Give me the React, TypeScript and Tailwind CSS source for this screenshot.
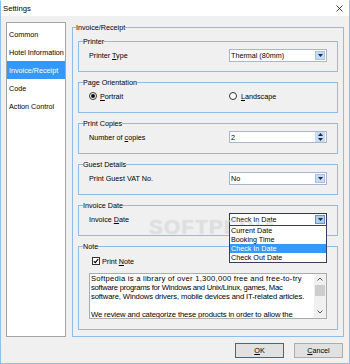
import React from "react";

// Access-key underline (Windows mnemonic)
function Mn({ children }: { children: React.ReactNode }) {
  return <span className="underline decoration-1 underline-offset-[1px]">{children}</span>;
}

function Arrow({ className = "" }: { className?: string }) {
  return (
    <svg width="5" height="3" viewBox="0 0 5 3" className={className}>
      <path d="M0 0H5L2.5 3Z" fill="#1b2a4a" />
    </svg>
  );
}

// ── GroupBox — fieldset with the legend sitting on the top line ──
function GroupBox({
  title,
  children,
  inset = "ml-[4px]",
}: {
  title: React.ReactNode;
  children: React.ReactNode;
  inset?: string;
}) {
  return (
    <fieldset className="min-w-0 border border-[#8dbdec]">
      <legend className={`${inset} h-[9px] leading-[9px]`}>{title}</legend>
      {children}
    </fieldset>
  );
}

// ── Row inside a group box: label left, control right ──
function Row({ children }: { children: React.ReactNode }) {
  return (
    <div className="box-content flex h-[18px] items-center justify-between pl-[10px] pr-[10px] pb-[7px]">
      {children}
    </div>
  );
}

function Combo({
  value,
  focused = false,
  children,
}: {
  value: string;
  focused?: boolean;
  children?: React.ReactNode;
}) {
  return (
    <div
      className={`relative flex h-[13px] w-[98px] items-center border bg-white ${
        focused ? "border-[#34346e]" : "border-[#a9b7c9]"
      }`}
    >
      <span className="flex-1 pl-[1px] leading-[9px]">{value}</span>
      <span
        className={`mr-[1px] flex h-[9px] w-[10px] items-center justify-center border ${
          focused ? "border-[#7191c6] bg-[#aecbf1]" : "border-[#a9c2e4] bg-[#c6dbf4]"
        }`}
      >
        <Arrow />
      </span>
      {children}
    </div>
  );
}

const DATE_OPTIONS = ["Current Date", "Booking Time", "Check In Date", "Check Out Date"];

// note text, one entry per wrapped line (tracking evens out the font's widths)
const NOTE_LINES = [
  { text: "Softpedia is a library of over 1,300,000 free and free-to-try", cls: "tracking-[0.22px]" },
  { text: "software programs for Windows and Unix/Linux, games, Mac", cls: "tracking-[-0.28px]" },
  { text: "software, Windows drivers, mobile devices and IT-related articles.", cls: "tracking-[-0.15px]" },
  { text: "", cls: "" },
  { text: "We review and categorize these products in order to allow the", cls: "tracking-[-0.14px]" },
];

const NAV = ["Common", "Hotel Information", "Invoice/Receipt", "Code", "Action Control"];

export default function App() {
  return (
    <div className="relative flex h-[364px] w-[350px] flex-col overflow-hidden border border-[#8cc0ee] border-t-white bg-[#f0f0f0] font-['Liberation_Sans',Arial,sans-serif] text-[7.2px] leading-[9px] text-black">
      {/* title bar */}
      <div className="flex h-[15px] shrink-0 items-center justify-between bg-white pl-[2px] pr-[6px]">
        <span className="text-[7.7px]">Settings</span>
        <svg width="7" height="7" viewBox="0 0 7 7">
          <path d="M0.5 0.5L6.5 6.5M6.5 0.5L0.5 6.5" stroke="#222" strokeWidth="0.9" />
        </svg>
      </div>

      <div className="flex gap-[6px] px-[5px] pt-[6px]">
        {/* page list */}
        <div className="h-[315px] w-[60px] shrink-0 overflow-hidden border border-[#a3a3a3] bg-white pt-[2px]">
          {NAV.map((item, i) => (
            <div
              key={item}
              className={`flex h-[18px] items-center whitespace-nowrap pl-[2px] ${
                i === 2 ? "bg-[#3399ff] text-white" : ""
              }`}
            >
              {item}
            </div>
          ))}
        </div>

        {/* page body */}
        <div className="mt-[1px] w-[272px]">
          <GroupBox title="Invoice/Receipt" inset="ml-[3px]">
            <div className="flex flex-col gap-[6px] px-[5px] pt-[5px] pb-[6px]">
              <GroupBox title="Printer">
                <Row>
                  <span>
                    Printer <Mn>T</Mn>ype
                  </span>
                  <Combo value="Thermal (80mm)" />
                </Row>
              </GroupBox>

              <GroupBox title="Page Orientation">
                <Row>
                  <label className="flex items-center gap-[3px]">
                    <span className="flex h-[8px] w-[8px] items-center justify-center rounded-full border border-[#333] bg-white">
                      <span className="h-[4px] w-[4px] rounded-full bg-[#111]" />
                    </span>
                    <span>
                      <Mn>P</Mn>ortrait
                    </span>
                  </label>
                  <label className="flex w-[98px] items-center gap-[4px]">
                    <span className="h-[8px] w-[8px] rounded-full border border-[#333] bg-white" />
                    <span>
                      <Mn>L</Mn>andscape
                    </span>
                  </label>
                </Row>
              </GroupBox>

              <GroupBox title="Print Copies">
                <Row>
                  <span>
                    Number of <Mn>c</Mn>opies
                  </span>
                  <div className="flex h-[12px] w-[98px] items-center border border-[#a9b7c9] bg-white">
                    <span className="flex-1 pl-[1px]">2</span>
                    <span className="mr-[1px] flex h-[10px] w-[10px] flex-col">
                      <span className="flex flex-1 items-center justify-center bg-[#c6dbf4]">
                        <Arrow className="rotate-180" />
                      </span>
                      <span className="flex flex-1 items-center justify-center bg-[#c6dbf4]">
                        <Arrow />
                      </span>
                    </span>
                  </div>
                </Row>
              </GroupBox>

              <GroupBox title="Guest Details">
                <Row>
                  <span>Print Guest VAT No.</span>
                  <Combo value="No" />
                </Row>
              </GroupBox>

              <GroupBox title="Invoice Date">
                <Row>
                  <span>
                    Invoice <Mn>D</Mn>ate
                  </span>
                  <Combo value="Check In Date" focused>
                    <div className="absolute left-[-1px] top-[11px] z-30 w-[98px] border border-[#3c3c5c] bg-white">
                      {DATE_OPTIONS.map((opt) => (
                        <div
                          key={opt}
                          className={`h-[9px] whitespace-nowrap pl-[1px] leading-[9px] ${
                            opt === "Check In Date" ? "bg-[#3399ff] text-white" : ""
                          }`}
                        >
                          {opt}
                        </div>
                      ))}
                    </div>
                  </Combo>
                </Row>
              </GroupBox>

              <GroupBox title="Note">
                <div className="px-[10px] pb-[10px]">
                  <label className="flex h-[20px] items-center gap-[2px] pl-[3px]">
                    <span className="flex h-[8px] w-[8px] items-center justify-center border border-[#333] bg-white">
                      <svg width="6" height="6" viewBox="0 0 6 6">
                        <path d="M0.8 3.1L2.3 4.6L5.2 1.2" fill="none" stroke="#000" strokeWidth="1.2" />
                      </svg>
                    </span>
                    <span>
                      Print <Mn>N</Mn>ote
                    </span>
                  </label>
                  <div className="mt-[2px] flex h-[46px] border border-[#acacac] bg-white">
                    <div className="flex-1 overflow-hidden pl-[1px] text-[7.7px]">
                      {NOTE_LINES.map((line, i) => (
                        <div key={i} className={`h-[9px] whitespace-nowrap leading-[9px] ${line.cls}`}>
                          {line.text}
                        </div>
                      ))}
                    </div>
                    <div className="flex w-[12px] flex-col items-center bg-[#f0f0f0] pt-[3px] pb-[4px]">
                      <svg width="6" height="4" viewBox="0 0 6 4">
                        <path d="M0.5 3.5L3 1L5.5 3.5" fill="none" stroke="#555" strokeWidth="1" />
                      </svg>
                      <div className="mt-[4px] h-[11px] w-[10px] bg-[#cdcdcd]" />
                      <div className="flex-1" />
                      <svg width="6" height="4" viewBox="0 0 6 4">
                        <path d="M0.5 0.5L3 3L5.5 0.5" fill="none" stroke="#555" strokeWidth="1" />
                      </svg>
                    </div>
                  </div>
                </div>
              </GroupBox>
            </div>
          </GroupBox>
        </div>
      </div>

      {/* dialog buttons */}
      <div className="mt-[6px] flex justify-end gap-[10px] pr-[6px]">
        <button className="flex h-[15px] w-[49px] items-center justify-center border border-[#0078d7] bg-[#e1e1e1]">
          <Mn>O</Mn>K
        </button>
        <button className="flex h-[15px] w-[49px] items-center justify-center border border-[#adadad] bg-[#e1e1e1]">
          <Mn>C</Mn>ancel
        </button>
      </div>

      {/* watermark */}
      <span className="pointer-events-none absolute left-[148px] top-[221px] z-20 text-[21px] font-bold tracking-[1px] text-white/45 [text-shadow:0_0_1px_rgba(0,0,0,0.18)]">
        SOFTPEDIA
      </span>
    </div>
  );
}
